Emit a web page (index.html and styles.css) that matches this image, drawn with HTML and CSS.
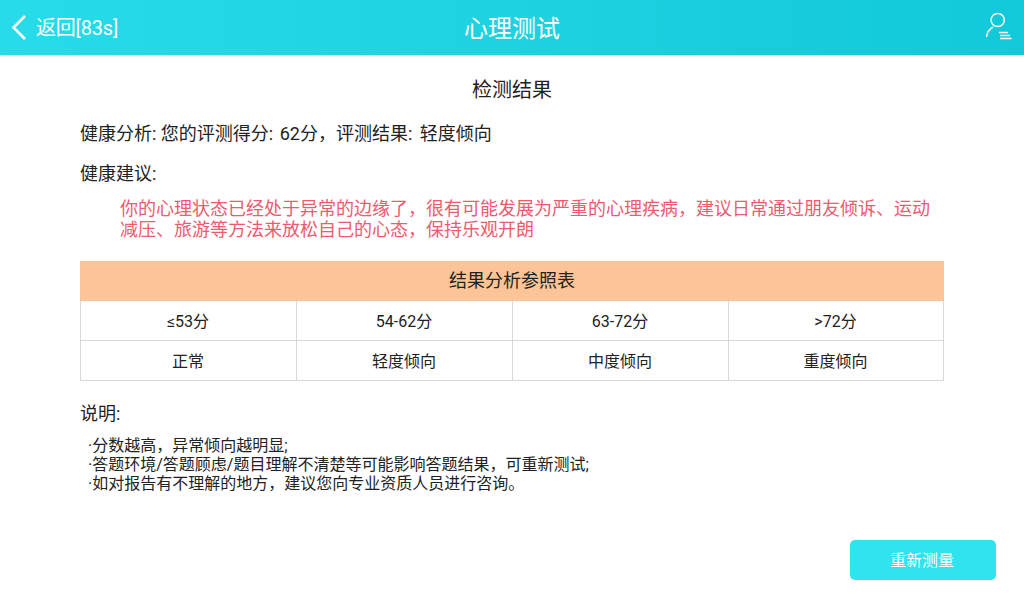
FILE: index.html
```html
<!DOCTYPE html>
<html lang="zh-CN">
<head>
    <meta charset="UTF-8">
    <title>心理测试</title>
    <link rel="stylesheet" href="styles.css">
</head>
<body>

    <div class="header">
        <div class="back">
            <svg class="back-icon" width="16" height="28" viewBox="0 0 16 28">
                <path d="M14 2 L2.5 13.5 L14 25" fill="none" stroke="#fff" stroke-width="2.6"/>
            </svg>
            <span class="back-text">返回[83s]</span>
        </div>
        <div class="title">心理测试</div>
        <svg class="user-icon" width="28" height="28" viewBox="0 0 28 28">
            <circle cx="13.7" cy="8" r="6.6" fill="none" stroke="#fff" stroke-width="1.5"/>
            <path d="M2.5 25 C3 20.5 5.5 17 9 15" fill="none" stroke="#fff" stroke-width="1.5"/>
            <path d="M15 20.5 H24 M16 23.5 H26 M16 26.5 H27.5" fill="none" stroke="#fff" stroke-width="1.5"/>
        </svg>
    </div>

    <div class="content">
        <h2>检测结果</h2>
        <p class="line">健康分析: 您的评测得分: <span class="score">62分，评测结果: </span><span class="level">轻度倾向</span></p>
        <p class="line advice-label">健康建议:</p>
        <p class="advice">你的心理状态已经处于异常的边缘了，很有可能发展为严重的心理疾病，建议日常通过朋友倾诉、运动减压、旅游等方法来放松自己的心态，保持乐观开朗</p>

        <div class="ref-table">
            <div class="ref-head">结果分析参照表</div>
            <div class="ref-row">
                <div class="ref-cell">≤53分</div>
                <div class="ref-cell">54-62分</div>
                <div class="ref-cell">63-72分</div>
                <div class="ref-cell">&gt;72分</div>
            </div>
            <div class="ref-row">
                <div class="ref-cell">正常</div>
                <div class="ref-cell">轻度倾向</div>
                <div class="ref-cell">中度倾向</div>
                <div class="ref-cell">重度倾向</div>
            </div>
        </div>

        <p class="line note-label">说明:</p>
        <ul class="notes">
            <li>·分数越高，异常倾向越明显;</li>
            <li>·答题环境/答题顾虑/题目理解不清楚等可能影响答题结果，可重新测试;</li>
            <li>·如对报告有不理解的地方，建议您向专业资质人员进行咨询。</li>
        </ul>
    </div>

    <div class="footer">
        <button class="btn">重新测量</button>
    </div>

</body>
</html>
```

FILE: styles.css
```css
body {
    font-family: Roboto, "Noto Sans CJK SC", sans-serif;
    background-color: #fff;
    color: #222;
    margin: 0;
    padding: 0;
    width: 1024px;
    height: 600px;
    overflow: hidden;
}
.header {
    height: 55px;
    background: linear-gradient(to right, #28dbe9, #12c9d9);
    color: #fff;
    display: flex;
    align-items: center;
    justify-content: space-between;
    padding: 0 12px 0 11px;
    position: relative;
}
.back {
    display: flex;
    align-items: center;
    gap: 9px;
    font-size: 20px;
}
.back-text {
    letter-spacing: -0.2px;
    margin-bottom: 2px;
}
.user-icon {
    margin-bottom: 3px;
}
.title {
    position: absolute;
    left: 0;
    right: 0;
    text-align: center;
    font-size: 24px;
    padding-bottom: 2px;
}
.content {
    padding: 0 80px;
}
h2 {
    font-size: 20px;
    font-weight: normal;
    text-align: center;
    line-height: 28px;
    margin: 21px 0 0;
}
.line {
    font-size: 18px;
    line-height: 24px;
    margin: 0;
}
.content h2 + .line {
    margin-top: 18px;
}
.score {
    margin-left: 2px;
}
.level {
    margin-left: 3px;
}
.advice-label {
    margin-top: 16px;
}
.advice {
    color: #ee5a6e;
    font-size: 18px;
    line-height: 21px;
    margin: 12px 0 0;
    padding-left: 40px;
    padding-right: 10px;
}
.ref-table {
    margin-top: 21px;
    border-left: 1px solid #d8d8d8;
    border-right: 1px solid #d8d8d8;
}
.ref-head {
    background-color: #fdc597;
    height: 40px;
    line-height: 40px;
    text-align: center;
    font-size: 18px;
    margin: 0 -1px;
}
.ref-row {
    display: grid;
    grid-template-columns: 215px 216px 216px 215px;
    height: 40px;
    border-bottom: 1px solid #d8d8d8;
    box-sizing: border-box;
}
.ref-cell {
    display: flex;
    align-items: center;
    justify-content: center;
    font-size: 16px;
    padding-bottom: 2px;
    padding-right: 1px;
    border-left: 1px solid #d8d8d8;
}
.ref-cell:first-child {
    border-left: none;
}
.note-label {
    margin-top: 21px;
}
.notes {
    list-style: none;
    margin: 10px 0 0;
    padding: 0 0 0 8px;
    font-size: 16px;
    line-height: 19px;
}
.footer {
    position: absolute;
    top: 540px;
    left: 850px;
}
.btn {
    width: 146px;
    height: 40px;
    padding: 0 2px 2px 0;
    background-color: #30e3ee;
    color: white;
    border: none;
    border-radius: 5px;
    font-family: inherit;
    font-size: 16px;
    cursor: pointer;
}
```
